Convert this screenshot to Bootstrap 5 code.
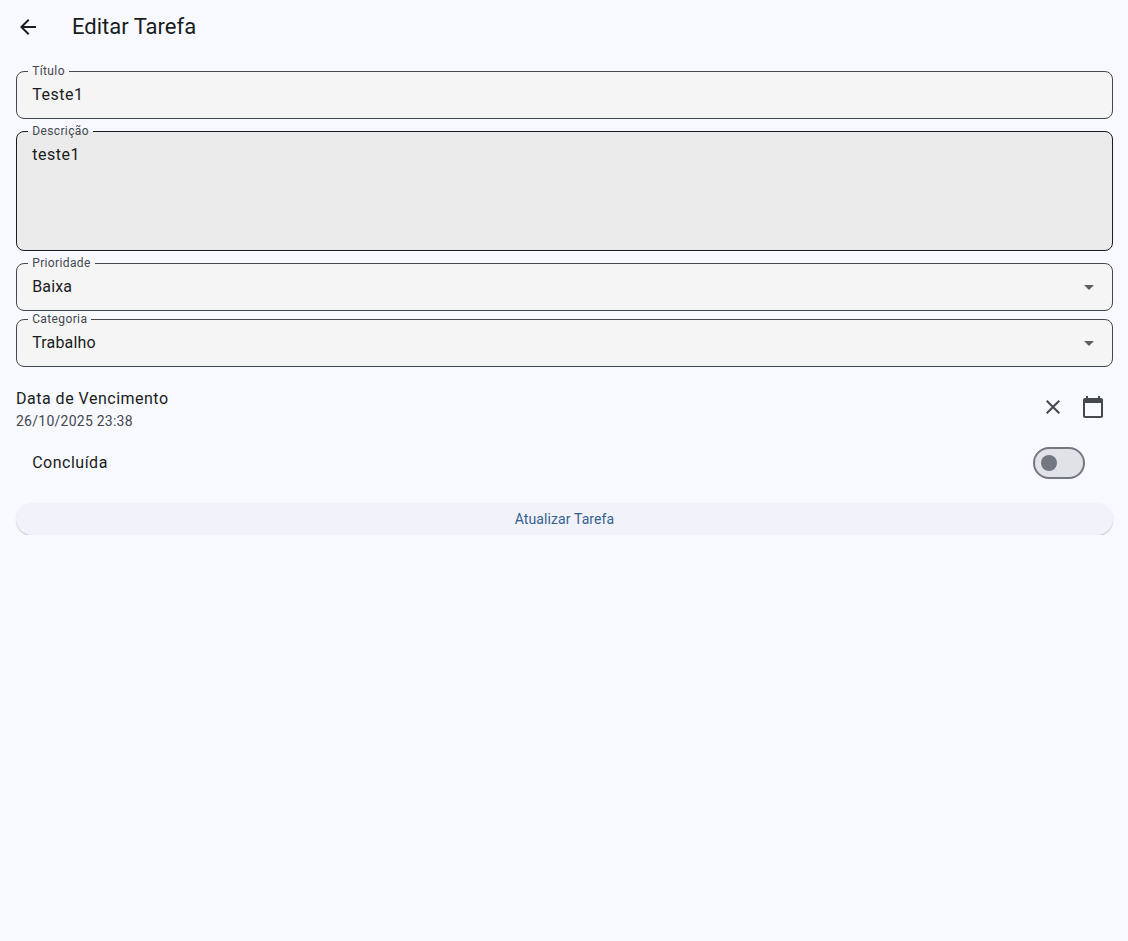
<!DOCTYPE html>
<html lang="pt-BR">
<head>
<meta charset="utf-8">
<meta name="viewport" content="width=device-width, initial-scale=1">
<title>Editar Tarefa</title>
<link href="https://cdn.jsdelivr.net/npm/bootstrap@5.3.0/dist/css/bootstrap.min.css" rel="stylesheet">
<style>
body{background:#f8f9ff;color:#191c20;font-family:Roboto,sans-serif;font-size:16px;letter-spacing:.5px;line-height:24px}
svg{display:block}
.topbar{height:55px;padding:0 16px 2px}
.page-title{font-size:22px;line-height:28px;letter-spacing:0;font-weight:400}
.form-area{padding:16px 15px 0 16px}
.field{height:48px;border:1px solid #43474e;border-radius:8px;background:#f5f5f5;padding:0 11px 0 15.2px}
.field-area{height:120px;margin:12px 0;border-color:#191c20;background:#ebebeb;padding-top:11px}
.field-label{left:11px;top:-9px;padding:0 4px 0 4.2px;font-size:12px;line-height:16px;letter-spacing:.375px;color:#43474e;z-index:0}
.field-label::before{content:"";position:absolute;left:0;right:0;top:8px;height:1px;background:#f5f5f5;z-index:-1}
.field-area .field-label::before{background:#ebebeb}
.pick{letter-spacing:.15px}
.due{margin-top:20px;height:51px}
.due-date{font-size:14px;line-height:20px;letter-spacing:.25px;color:#43474e}
.actions{color:#43474e;padding:8px 8px 0 0;gap:18px}
.done-row{height:50px;padding:0 28px 0 16.2px}
.toggle{width:52px;height:32px;border:2px solid #73777f;border-radius:16px;background:#e1e2e8;padding-left:6px}
.knob{width:16px;height:16px;background:#73777f}
.submit{margin-top:15px;height:32px;border:0;border-radius:16px;padding:0;background:#f1f2fa;color:#36618e;font-size:14px;font-weight:400;letter-spacing:.1px;line-height:20px;box-shadow:0 1px 0 #cdced4,0 1px 2px rgba(0,0,0,.1)}
</style>
</head>
<body>
<header class="topbar d-flex align-items-center">
  <svg width="24" height="24" viewBox="0 0 24 24" fill="currentColor"><path d="M20 11H7.83l5.59-5.59L12 4l-8 8 8 8 1.41-1.41L7.83 13H20v-2z"/></svg>
  <h1 class="page-title mb-0 ms-3 ps-3">Editar Tarefa</h1>
</header>
<main class="form-area d-flex flex-column">
  <div class="field position-relative d-flex align-items-center">
    <span class="field-label position-absolute">Título</span><span>Teste1</span>
  </div>
  <div class="field field-area position-relative">
    <span class="field-label position-absolute">Descrição</span><span>teste1</span>
  </div>
  <div class="field position-relative d-flex align-items-center justify-content-between">
    <span class="field-label position-absolute">Prioridade</span><span class="pick">Baixa</span>
    <svg width="24" height="24" viewBox="0 0 24 24" fill="#616161"><path d="M7 10l5 5 5-5z"/></svg>
  </div>
  <div class="field position-relative d-flex align-items-center justify-content-between mt-2">
    <span class="field-label position-absolute">Categoria</span><span class="pick">Trabalho</span>
    <svg width="24" height="24" viewBox="0 0 24 24" fill="#616161"><path d="M7 10l5 5 5-5z"/></svg>
  </div>
  <div class="due d-flex justify-content-between align-items-start">
    <div>
      <div>Data de Vencimento</div>
      <div class="due-date">26/10/2025 23:38</div>
    </div>
    <div class="actions d-flex">
      <svg width="20" height="24" viewBox="2 0 20 24" fill="currentColor"><path d="M19 6.41L17.59 5 12 10.59 6.41 5 5 6.41 10.59 12 5 17.59 6.41 19 12 13.41 17.59 19 19 17.59 13.41 12z"/></svg>
      <svg width="24" height="24" viewBox="0 0 24 24" fill="currentColor"><path d="M20 3h-1V1h-2v2H7V1H5v2H4c-1.1 0-2 .9-2 2v16c0 1.1.9 2 2 2h16c1.1 0 2-.9 2-2V5c0-1.1-.9-2-2-2zm0 18H4V8h16v13z"/></svg>
    </div>
  </div>
  <div class="done-row d-flex align-items-center justify-content-between">
    <span>Concluída</span>
    <span class="toggle d-flex align-items-center"><span class="knob rounded-circle"></span></span>
  </div>
  <button type="button" class="submit btn w-100">Atualizar Tarefa</button>
</main>
<script src="https://cdn.jsdelivr.net/npm/bootstrap@5.3.0/dist/js/bootstrap.bundle.min.js"></script>
</body>
</html>
